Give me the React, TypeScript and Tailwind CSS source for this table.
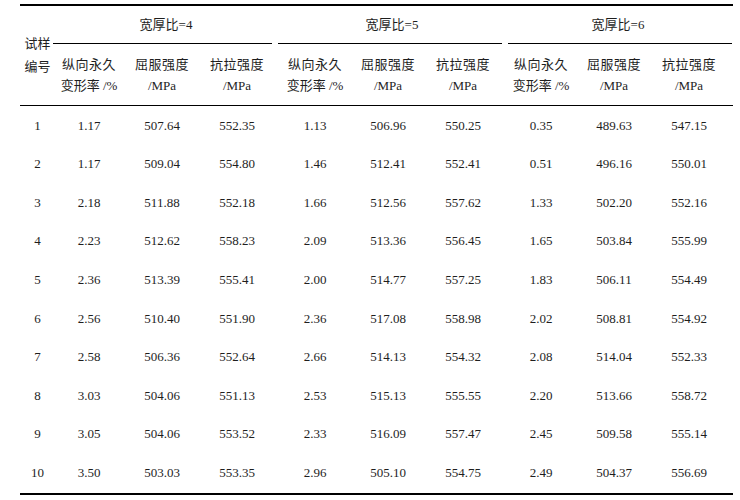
const groups = ["=4", "=5", "=6"];

const rows: string[][] = [
  ["1", "1.17", "507.64", "552.35", "1.13", "506.96", "550.25", "0.35", "489.63", "547.15"],
  ["2", "1.17", "509.04", "554.80", "1.46", "512.41", "552.41", "0.51", "496.16", "550.01"],
  ["3", "2.18", "511.88", "552.18", "1.66", "512.56", "557.62", "1.33", "502.20", "552.16"],
  ["4", "2.23", "512.62", "558.23", "2.09", "513.36", "556.45", "1.65", "503.84", "555.99"],
  ["5", "2.36", "513.39", "555.41", "2.00", "514.77", "557.25", "1.83", "506.11", "554.49"],
  ["6", "2.56", "510.40", "551.90", "2.36", "517.08", "558.98", "2.02", "508.81", "554.92"],
  ["7", "2.58", "506.36", "552.64", "2.66", "514.13", "554.32", "2.08", "514.04", "552.33"],
  ["8", "3.03", "504.06", "551.13", "2.53", "515.13", "555.55", "2.20", "513.66", "558.72"],
  ["9", "3.05", "504.06", "553.52", "2.33", "516.09", "557.47", "2.45", "509.58", "555.14"],
  ["10", "3.50", "503.03", "553.35", "2.96", "505.10", "554.75", "2.49", "504.37", "556.69"],
];

// where the short rule under each group heading starts and stops
const ruleMargins = ["ml-[-2px] mr-[9px]", "ml-[-3px] mr-[5px]", "ml-[1px] mr-[1px]"];

const latin = "font-['Liberation_Serif',serif]";

function SubCell({ top, bottom, cls }: { top: string; bottom: string; cls: string }) {
  return (
    <div className={`${cls} h-[61px] flex flex-col items-center justify-center`}>
      <div className="leading-[21px] tracking-[0.5px]">{top}</div>
      <div className="leading-[21px]">{bottom}</div>
    </div>
  );
}

export default function App() {
  return (
    <div className="w-[740px] h-[500px] bg-white pt-[4px] pl-[20px] text-[#1e1e1e] text-[13px] font-['Liberation_Serif','Noto_Sans_CJK_SC',serif]">
      <div className="w-[713px] border-t-2 border-b-2 border-black">
        <div className="flex border-b border-black">
          <div className="w-[35px] flex flex-col items-center justify-center pb-[2px]">
            <div className="leading-[23px]">试样</div>
            <div className="leading-[23px]">编号</div>
          </div>
          {groups.map((g, i) => (
            <div key={g} className="w-[226px] flex flex-col">
              <div className="h-[37px] flex items-center justify-center pr-[4px]">
                宽厚比<span className={latin}>{g}</span>
              </div>
              <div className={`h-px bg-black ${ruleMargins[i]}`} />
              <div className="flex">
                <SubCell top="纵向永久" bottom="变形率 /%" cls="w-[68px]" />
                <SubCell top="屈服强度" bottom="/MPa" cls="w-[78px]" />
                <SubCell top="抗拉强度" bottom="/MPa" cls="w-[80px] pr-[8px]" />
              </div>
            </div>
          ))}
        </div>
        <div className={`pb-[1px] ${latin}`}>
          {rows.map((r) => (
            <div
              key={r[0]}
              className="grid grid-cols-[35px_68px_78px_80px_68px_78px_80px_68px_78px_80px] h-[38.6px] items-center text-center"
            >
              {r.map((v, j) => (
                <div key={j} className={j > 0 && j % 3 === 0 ? "pr-[8px]" : ""}>
                  {v}
                </div>
              ))}
            </div>
          ))}
        </div>
      </div>
    </div>
  );
}
